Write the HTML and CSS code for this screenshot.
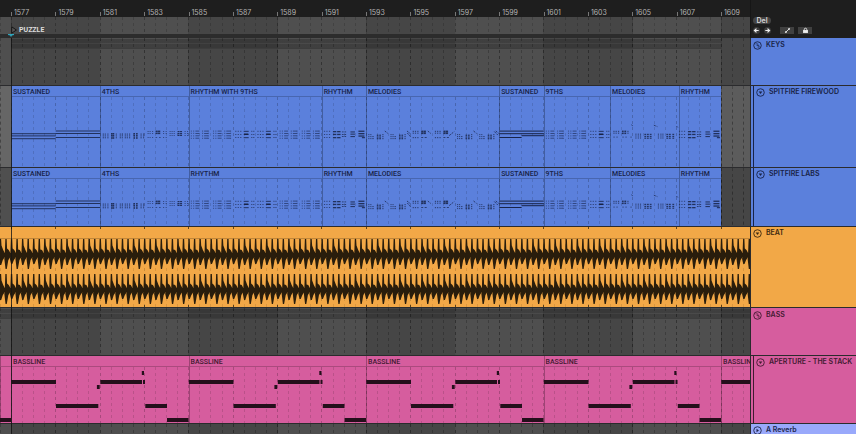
FILE: index.html
```
<!DOCTYPE html>
<html lang="en">
<head>
<meta charset="utf-8">
<title>Arrangement</title>
<link rel="stylesheet" href="styles.css">
</head>
<body>
<main class="arranger">
  <header class="top">
    <div class="timebar">
      <div class="ruler" id="ruler"></div>
      <div class="locators" data-grid="scrub">
        <button class="locator" type="button"><svg class="flag" viewBox="0 0 6 8"><path d="M.7 .8V7.2L5.4 4Z"/></svg>PUZZLE</button>
      </div>
      <div class="loopbar"><svg class="startmark" viewBox="0 0 6 3"><path d="M0 0H6V1L4 1.6L3 3L2 1.6L0 1Z"/></svg></div>
    </div>
    <div class="tools">
      <div class="toolrow"><button class="del" type="button">Del</button></div>
      <div class="toolrow">
        <button class="nav" type="button" aria-label="Previous locator"><svg viewBox="0 0 8 8"><path d="M6.5 4H2M4 1.8L1.7 4L4 6.2"/></svg></button>
        <button class="nav" type="button" aria-label="Next locator"><svg viewBox="0 0 8 8"><path d="M1.5 4H6M4 1.8L6.3 4L4 6.2"/></svg></button>
        <button class="tool first" type="button" aria-label="Automation mode"><svg viewBox="0 0 8 8"><path d="M2 6L6 2"/><circle cx="2.2" cy="5.8" r=".6"/><circle cx="5.8" cy="2.2" r=".6"/></svg></button>
        <button class="tool" type="button" aria-label="Lock envelopes"><svg viewBox="0 0 8 8"><path class="shackle" d="M2.6 4V2.8a1.4 1.4 0 0 1 2.8 0V4"/><rect x="1.8" y="4" width="4.4" height="2.4"/></svg></button>
      </div>
    </div>
  </header>

  <section class="track group blue h-group">
    <div class="lane" data-grid="plain"><div class="overview part"></div></div>
    <div class="head"><button class="fold" type="button" aria-label="Unfold"><svg viewBox="0 0 10 10"><circle cx="5" cy="5" r="4.2"/><path class="thin" d="M2.6 3.2H5.4M4 5H6.6M5 6.8H7.4M5.4 3.2V5M6.6 5V6.8"/></svg></button><h2>KEYS</h2></div>
  </section>
  <section class="track nested blue h-tall selected">
    <div class="lane" data-grid="clips" data-clips="firewood"></div>
    <div class="head"><button class="fold" type="button" aria-label="Fold"><svg viewBox="0 0 10 10"><circle cx="5" cy="5" r="4.2"/><path class="solid" d="M3 3.9H7L5 6.6Z"/></svg></button><h2>SPITFIRE FIREWOOD</h2></div>
  </section>
  <section class="track nested blue h-mid">
    <div class="lane" data-grid="clips" data-clips="labs"></div>
    <div class="head"><button class="fold" type="button" aria-label="Fold"><svg viewBox="0 0 10 10"><circle cx="5" cy="5" r="4.2"/><path class="solid" d="M3 3.9H7L5 6.6Z"/></svg></button><h2>SPITFIRE LABS</h2></div>
  </section>
  <section class="track orange h-wide">
    <div class="lane" data-grid="audio" data-wave="beat"></div>
    <div class="head"><button class="fold" type="button" aria-label="Fold"><svg viewBox="0 0 10 10"><circle cx="5" cy="5" r="4.2"/><path class="solid" d="M3 3.9H7L5 6.6Z"/></svg></button><h2>BEAT</h2></div>
  </section>
  <section class="track group pink h-group">
    <div class="lane" data-grid="plain"><div class="overview"></div></div>
    <div class="head"><button class="fold" type="button" aria-label="Unfold"><svg viewBox="0 0 10 10"><circle cx="5" cy="5" r="4.2"/><path class="thin" d="M2.6 3.2H5.4M4 5H6.6M5 6.8H7.4M5.4 3.2V5M6.6 5V6.8"/></svg></button><h2>BASS</h2></div>
  </section>
  <section class="track nested pink h-bass">
    <div class="lane" data-grid="clips" data-clips="bass"></div>
    <div class="head"><button class="fold" type="button" aria-label="Fold"><svg viewBox="0 0 10 10"><circle cx="5" cy="5" r="4.2"/><path class="solid" d="M3 3.9H7L5 6.6Z"/></svg></button><h2>APERTURE - THE STACK</h2></div>
  </section>
  <section class="track return last">
    <div class="lane" data-grid="plain"></div>
    <div class="head"><button class="fold" type="button" aria-label="Unfold"><svg viewBox="0 0 10 10"><circle cx="5" cy="5" r="4.2"/><path class="solid" d="M3.9 3V7L6.6 5Z"/></svg></button><h2>A Reverb</h2></div>
  </section>
  <div class="playhead"></div>
</main>
<script src="app.js"></script>
</body>
</html>
```
FILE: styles.css
```
:root {
  --bar: calc(710px / 32);
  --lead: 11px;
  --side: 106px;
  --line: #2b2b2d;
}
* { box-sizing: border-box; }
body {
  margin: 0;
  background: #1e1e1e;
  font-family: Inter, "Liberation Sans", sans-serif;
  font-size: 7px;
  line-height: 10px;
  overflow: hidden;
}
button { font: inherit; color: inherit; border: 0; padding: 0; margin: 0; background: none; }
h2 { margin: 0; font-size: 7px; font-weight: 600; line-height: 10px; white-space: nowrap; }
svg { display: block; }

.arranger { position: relative; display: flex; flex-direction: column; height: 100vh; overflow: hidden; }
.top { display: flex; height: 38px; flex: none; }
.timebar { flex: 1; min-width: 0; display: flex; flex-direction: column; }
.ruler { height: 17px; display: flex; padding-left: var(--lead); align-items: flex-end; color: #b4b4b4; }
.mark { flex: none; width: calc(var(--bar) * 2); height: 9px; display: flex; }
.mark::before { content: ""; width: 1px; height: 4px; margin-top: 4px; background: #777; }
.mark span { margin-left: 2px; height: 9px; line-height: 9px; }
.locators { position: relative; height: 17px; display: flex; align-items: center; padding: 9px 0 0 11px; overflow: hidden; }
.locator { position: relative; display: flex; align-items: center; gap: 2px; font-family: Roboto, sans-serif; font-weight: 700; line-height: 8px; color: #dcdcdc; }
.flag { width: 6px; height: 8px; fill: #555; stroke: #151515; stroke-width: 1; }
.loopbar { height: 4px; background: #2c2c2c; padding-left: 8px; }
.startmark { width: 6px; height: 3px; fill: #2fa6bd; }

.tools { width: var(--side); flex: none; padding: 17px 0 0 2px; display: flex; flex-direction: column; gap: 3px; border-left: 1px solid #161616; color: #d6d6d6; }
.toolrow { display: flex; align-items: center; height: 7px; }
.del { width: 18px; height: 7px; line-height: 7px; border-radius: 4px; background: #444; font-weight: 600; text-align: center; }
.nav { width: 7px; height: 7px; border-radius: 4px; background: #3c3c3c; margin-right: 4px; }
.nav svg { width: 7px; height: 7px; fill: none; stroke: #eee; stroke-width: 1.4; }
.tool { width: 14px; height: 7px; background: #404040; margin-right: 4px; display: flex; justify-content: center; }
.first { margin-left: 5px; }
.tool svg { width: 7px; height: 7px; fill: #eee; stroke: #eee; stroke-width: 1; }
.tool .shackle { fill: none; }

.track { display: flex; flex: none; }
.h-group { height: 48px; }
.h-tall { height: 82px; }
.h-wide { height: 81px; }
.h-mid { height: 59px; }
.h-bass { height: 68px; }
.last { flex: 1 0 10px; }
.lane { position: relative; flex: 1; min-width: 0; display: flex; overflow: hidden; border-bottom: 1px solid var(--line); }
.last .lane { border-bottom: 0; }
.head { width: var(--side); flex: none; display: flex; align-items: flex-start; gap: 4px; padding: 1px 0 0 2px; border-left: 1px solid var(--line); border-bottom: 1px solid var(--line); background: var(--tone); color: var(--ink); }
.last .head { border-bottom: 0; }
.nested .head { position: relative; padding-left: 5px; }
.nested .head::before { content: ""; position: absolute; left: 2px; top: 0; bottom: 0; width: 1px; background: var(--ink); }
.fold { width: 9px; height: 10px; flex: none; display: flex; align-items: center; }
.fold svg { width: 9px; height: 9px; fill: none; stroke: currentColor; stroke-width: 1; }
.fold .solid { fill: currentColor; stroke: none; }
.fold .thin { stroke-width: .7; }
.blue { --tone: #5b80dc; --ink: #182347; }
.orange { --tone: #f2a847; --ink: #3b2810; }
.pink { --tone: #d65d9e; --ink: #421a31; --note: #240f1b; }
.return { --tone: #99a9fb; --ink: #20264a; }
.group .head { padding-top: 2px; }

.grid { position: absolute; left: 0; top: 0; width: 100%; height: 100%; }
.over { top: 11px; height: calc(100% - 11px); }
.overview { position: absolute; left: var(--lead); right: 0; top: 1px; height: 10px; border-bottom: 1px solid #3d3d3d; background: linear-gradient(#0003 4px, #0001 4px, #0001 5px, #0003 5px); }
.pink .overview { left: 0; }
.part { right: auto; width: calc(var(--bar) * 32); }

.clips { position: relative; display: flex; padding-left: var(--lead); }
.bassrow { padding-left: 0; }
.clip { flex: none; background: var(--tone); border-left: 1px solid #0004; color: var(--ink); }
.clip h3 { margin: 0; height: 11px; padding-left: 1px; font-family: Roboto, sans-serif; font-size: 7px; line-height: 12px; font-weight: 500; white-space: nowrap; border-bottom: 1px solid #0003; }
.notes { position: absolute; left: 0; top: 0; width: 100%; height: 100%; fill: var(--note, var(--ink)); }
.audioclip { position: relative; flex: 1; background: var(--tone); }
.audioclip::before { content: ""; display: block; height: 11px; border-bottom: 1px solid #0003; }
.wave { fill: #291d0c; }
.playhead { position: absolute; left: 11px; top: 38px; bottom: 0; width: 1px; background: #151515; opacity: .8; }
```
FILE: app.js
```
const NS = "http://www.w3.org/2000/svg";
const BAR = 710 / 32, X0 = 11.3, WIDE = 2400;
const VIEW = document.querySelector(".timebar").clientWidth;

function svg(cls, body) {
  const s = document.createElementNS(NS, "svg");
  s.setAttribute("class", cls);
  s.innerHTML = body;
  return s;
}
const rect = (x, y, w, h, extra = "") => `<rect x="${x}" y="${y}" width="${w}" height="${h}" ${extra}/>`;

/* ruler: one label every two bars, as many as fit */
const ruler = document.getElementById("ruler");
for (let i = 0; X0 + i * BAR * 2 + 20 < VIEW; i++) {
  const m = document.createElement("div");
  m.className = "mark";
  m.innerHTML = `<span>${1577 + i * 2}</span>`;
  ruler.append(m);
}

/* grid shading and dashed lines */
function stripes(lift) {
  let out = "";
  const tones = lift ? ["#5c5c5c", "#666"] : ["#464646", "#4f4f4f"];
  for (let i = -1; X0 + i * BAR * 4 < WIDE; i++)
    out += rect(X0 + i * BAR * 4, 0, BAR * 4, 200, `fill="${tones[Math.abs(i) % 2]}"`);
  return out;
}
function lines(alpha) {
  let out = "";
  for (let i = -1; X0 + i * BAR / 2 < WIDE; i++) {
    const x = Math.floor(X0 + i * BAR / 2) + .5;
    const a = i % 4 === 0 ? alpha * 1.6 : alpha;
    out += `<path d="M${x} 0V200" stroke="#000" stroke-opacity="${a}" stroke-dasharray="3 3"/>`;
  }
  return out;
}

/* MIDI note drawing */
const cols = (xs, ys, w = 1.2, h = 1, a = .75) =>
  xs.map(x => ys.map(y => rect(x, y, w, h, `opacity="${a}"`)).join("")).join("");
const TOP = 130;
function sustained(x, w) {
  return [3.2, 5.4, 8.2].map(y => rect(x, y, w, 1, 'opacity=".85"')).join("") +
    [.5, 3, 7].map(y => rect(x + w, y, w, 1, 'opacity=".85"')).join("");
}
function fourths(x) {
  let s = cols([2.7, 4.7, 7.3, 15.7, 19.7, 21.7, 24.7, 26.7, 29, 40.5, 43].map(v => v + x), [3.4, 5.2, 7], 1.1, 1.4, .6);
  s += cols([11, 12.6, 33.4, 36].map(v => v + x), [3, 5, 7.2], 1.6, 1.6, .85);
  s += cols([47.5, 49.5, 52, 63, 65.6].map(v => v + x), [1, 3, 7], 1.1, 1, .6);
  s += cols([55.5, 58].map(v => v + x), [.6, 2.6], 2.2, 1.5, .85) + cols([55.5, 59].map(v => v + x), [7], 1.6, 1, .6);
  s += cols([69.5, 71.5, 73.6, 84.5, 87].map(v => v + x), [1, 3, 5], 1.1, 1, .6);
  return s + cols([77.5, 80].map(v => v + x), [1, 3, 4.8], 2, 1.2, .85);
}
function rhythm(x, bars) {
  let s = "";
  for (let b = 0; b < bars; b++) {
    const o = x + b * BAR, odd = (b >> 1) % 2;
    if (!odd) {
      s += cols([2, 4.3, 13.2, 19].map(v => v + o), [.6, 2.8, 5.4, 7.8], 1.1, 1, .55);
      s += cols([6.6, 15.3].map(v => v + o), [.6, 3, 5.3, 7.7], 4, 1, .6);
    } else {
      s += cols([2, 4.5, 7, 18, 20].map(v => v + o), [.8, 4, 7], 1.2, 1, .65);
      s += cols([10.5].map(v => v + o), [.8, 3.8, 7], 5, 1.2, .7);
      s += rect(o + 11, 3.6, 4, 1.4);
    }
  }
  return s;
}
function rhythmEnd(x) {
  return cols([2, 4.4, 7].map(v => v + x), [.8, 4, 7], 1.2, 1, .65) +
    cols([11, 15.2].map(v => v + x), [1, 3.8, 7], 3.4, 1.3, .85) +
    cols([20, 22.5].map(v => v + x), [1.4, 4, 6], 1.7, 1, .7) +
    cols([28.5].map(v => v + x), [1.4, 3.6, 6], 4.5, 1.1, .8) +
    cols([36.5].map(v => v + x), [.6, 3, 5.4], 6, 1.3, .85) + rect(x + 40, 7.2, 3, 1);
}
const slash = (x, y, dx, dy) => `<path d="M${x} ${y}l${dx} ${dy}" stroke="var(--ink)" stroke-width="1" stroke-dasharray="2 1" opacity=".75"/>`;
function melodyLow(x) {
  return cols([2, 4].map(v => v + x), [4, 6, 8], 1.1, 1.1, .65) +
    cols([6].map(v => v + x), [6, 8], 1.4, 1.1, .65) +
    cols([10.5, 13].map(v => v + x), [4.6, 6.4, 8], 1.6, 1.3, .8) +
    cols([16].map(v => v + x), [4, 6, 8], 1.2, 1.2, .65) + slash(x + 18.5, 1, 3, 2.4);
}
function melodyHigh(x) {
  return cols([2, 4.2, 6.6].map(v => v + x), [.8, 2.6, 7], 1.2, 1.2, .65) +
    cols([10.5, 13].map(v => v + x), [.6, 2.4], 2.2, 1.7, .85) +
    cols([10.5, 14].map(v => v + x), [7], 2, 1, .7);
}
function melodies(x) {
  let s = "";
  [0, 1, 4, 5].forEach(b => { s += melodyLow(x + b * BAR); });
  s += slash(x + 41, 3, 3.5, 4);
  [2, 3].forEach(b => { s += melodyHigh(x + b * BAR); });
  return s + slash(x + 61.5, 1, 3, 2.5) + slash(x + 83, 5.5, 5, -4) + slash(x + 128, 1.5, 4, 4);
}
function melodiesTwo(x) {
  return cols([3, 5.2, 7.6, 17].map(v => v + x), [.8, 2.6], 1.2, 1.2, .65) +
    cols([3, 6, 12, 15, 20].map(v => v + x), [6.6], 1.4, 1, .6) +
    cols([11.5, 14].map(v => v + x), [.6, 2.6], 1.8, 1.5, .85) +
    cols([25, 27.4, 29.6, 47.5, 50, 52].map(v => v + x), [3.6, 5.4, 7.4], 1.1, 1.2, .65) +
    cols([34, 36.6, 39.4, 56, 58.6, 62].map(v => v + x), [3.8, 5.8, 7.6], 1.8, 1.2, .8) +
    slash(x + 21, -5.2, 1.4, 1) + slash(x + 43.5, -4.8, 3.5, 1.4) + slash(x + 66, -4, 2, 2);
}
function keysNotes(shift) {
  const at = b => X0 + b * BAR;
  let s = sustained(at(0), BAR * 2) + fourths(at(4)) + rhythm(at(8), 6) + rhythmEnd(at(14)) + melodies(at(16));
  s += rect(at(22), .6, BAR * 2, 1) + rect(at(22), 3.2, BAR * 2, 1) + rect(at(22), 7, BAR, 1) + rect(at(23), 5.2, BAR, 1);
  s += rhythm(at(24), 3) + melodiesTwo(at(27)) + rhythmEnd(at(30));
  return `<g transform="translate(0 ${shift})">${s}</g>`;
}
function bassNotes() {
  let s = "";
  for (let x = X0 - BAR * 8; x < WIDE; x += BAR * 8)
    s += [[0, 24, 44.7, 4], [44.7, 48, 42.3, 4], [85.6, 29, 2.8, 4], [89, 24, 41.7, 4], [131.7, 24, 2, 4],
      [130.5, 15, 2.2, 4], [134, 48, 21.7, 4], [155.7, 62, 21.6, 4]].map(n => rect(x + n[0], n[1], n[2], n[3])).join("");
  return s;
}

const KEYS = second => [["SUSTAINED", 4], ["4THS", 4], [second, 6], ["RHYTHM", 2], ["MELODIES", 6], ["SUSTAINED", 2], ["9THS", 3], ["MELODIES", 3.1], ["RHYTHM", 1.9]];
const SETS = {
  firewood: { clips: KEYS("RHYTHM WITH 9THS"), notes: () => keysNotes(TOP - 86) },
  labs: { clips: KEYS("RHYTHM"), notes: () => keysNotes(32) },
  bass: { clips: [["", 0], ...Array(Math.ceil((VIEW - X0) / (BAR * 8))).fill(["BASSLINE", 8])], notes: bassNotes }
};

/* stereo waveform: four hits per bar around two centre lines */
function wave() {
  const step = BAR / 4, shapes = [[16, 9, .4], [16, 14, .35], [16, 10, .6], [16, 14, .4]];
  let s = "";
  [28, 63].forEach(c => {
    s += rect(0, c - 2, WIDE, 4);
    for (let i = -3; X0 + i * step < WIDE; i++) {
      const x = X0 + i * step, [u, d, k] = shapes[(i + 8) % 4];
      s += `<path d="M${x - 1} ${c}L${x - .4} ${c - u}H${x + .9}L${x + 1.3} ${c - u * k}L${x + 3} ${c - 5}L${x + 4.6} ${c - 2}V${c + 2}L${x + 2.6} ${c + 5}L${x + 1} ${c + d}H${x - .2}L${x - 1.4} ${c + 4}Z"/>`;
    }
  });
  return s;
}

document.querySelectorAll("[data-grid]").forEach(lane => {
  const kind = lane.dataset.grid;
  const lift = !!lane.closest(".selected");
  lane.prepend(svg("grid", stripes(lift) + lines(kind === "scrub" ? .16 : .22)));
  if (lane.dataset.clips) {
    const set = SETS[lane.dataset.clips], row = document.createElement("div");
    row.className = "clips" + (lane.dataset.clips === "bass" ? " bassrow" : "");
    set.clips.forEach(([name, bars]) => {
      const c = document.createElement("article");
      c.className = "clip";
      c.style.width = bars ? `calc(var(--bar) * ${bars})` : "var(--lead)";
      c.innerHTML = `<h3>${name}</h3>`;
      row.append(c);
    });
    lane.append(row, svg("grid over", lines(.13)), svg("notes", set.notes()));
  }
  if (lane.dataset.wave) {
    const c = document.createElement("article");
    c.className = "audioclip";
    let ticks = "";
    for (let i = 0; X0 + i * BAR * 2 < WIDE; i++) {
      const x = Math.floor(X0 + i * BAR * 2);
      ticks += rect(x, 0, 1, 2, 'opacity=".7"') + rect(x, 78, 1, 2, 'opacity=".7"');
    }
    lane.append(c, svg("grid over", lines(.1)), svg("grid wave", wave() + ticks));
  }
});
```
